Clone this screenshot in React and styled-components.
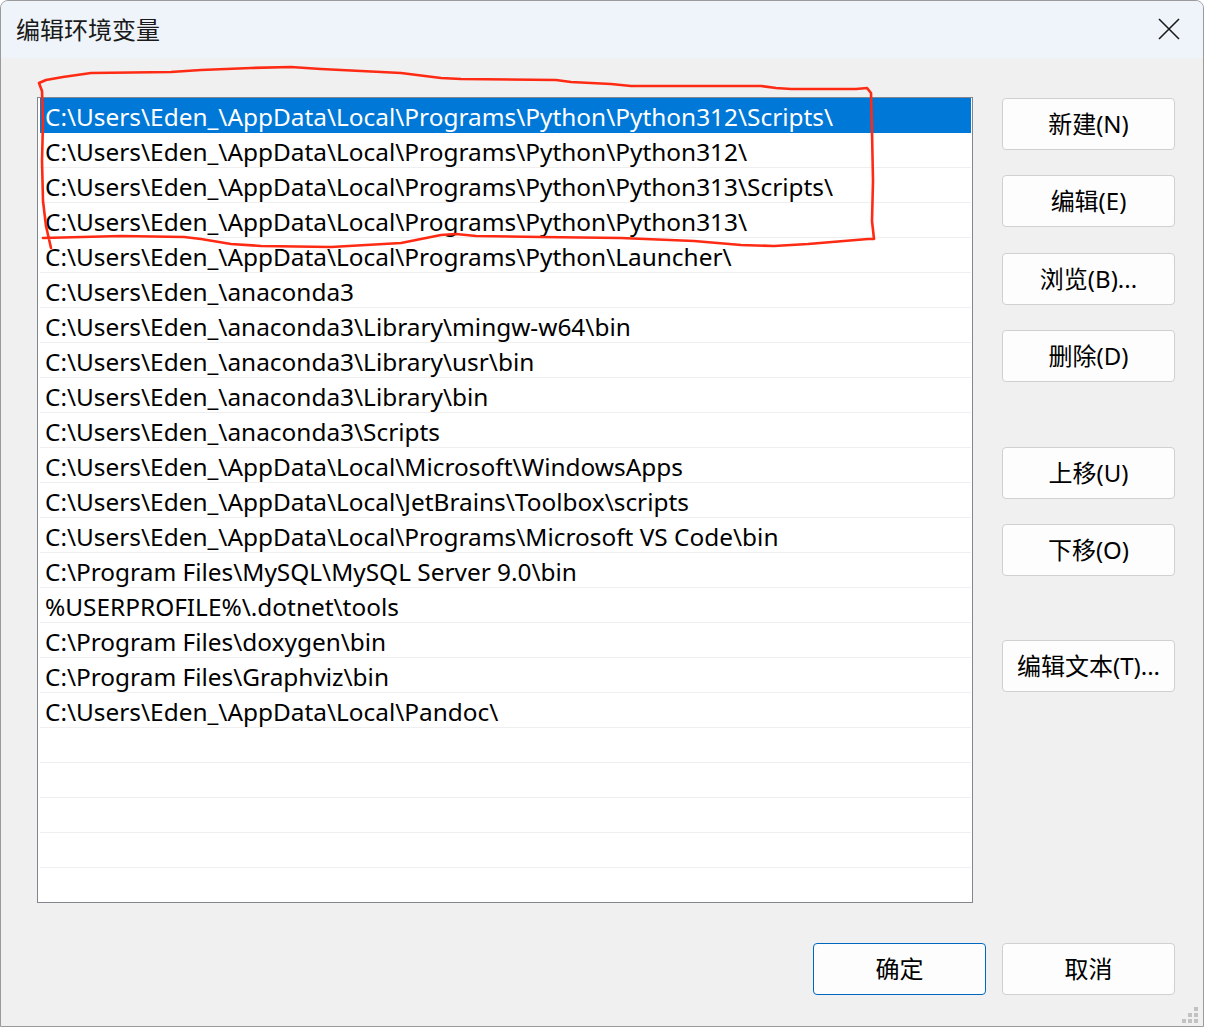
import React from 'react';
import styled, { createGlobalStyle } from 'styled-components';

const GlobalStyle = createGlobalStyle`
  html, body {
    margin: 0;
    padding: 0;
    background: #ffffff;
  }
  body {
    font-family: "Noto Sans", "Noto Sans CJK SC", sans-serif;
    color: #000;
  }
`;

const paths = [
  'C:\\Users\\Eden_\\AppData\\Local\\Programs\\Python\\Python312\\Scripts\\',
  'C:\\Users\\Eden_\\AppData\\Local\\Programs\\Python\\Python312\\',
  'C:\\Users\\Eden_\\AppData\\Local\\Programs\\Python\\Python313\\Scripts\\',
  'C:\\Users\\Eden_\\AppData\\Local\\Programs\\Python\\Python313\\',
  'C:\\Users\\Eden_\\AppData\\Local\\Programs\\Python\\Launcher\\',
  'C:\\Users\\Eden_\\anaconda3',
  'C:\\Users\\Eden_\\anaconda3\\Library\\mingw-w64\\bin',
  'C:\\Users\\Eden_\\anaconda3\\Library\\usr\\bin',
  'C:\\Users\\Eden_\\anaconda3\\Library\\bin',
  'C:\\Users\\Eden_\\anaconda3\\Scripts',
  'C:\\Users\\Eden_\\AppData\\Local\\Microsoft\\WindowsApps',
  'C:\\Users\\Eden_\\AppData\\Local\\JetBrains\\Toolbox\\scripts',
  'C:\\Users\\Eden_\\AppData\\Local\\Programs\\Microsoft VS Code\\bin',
  'C:\\Program Files\\MySQL\\MySQL Server 9.0\\bin',
  '%USERPROFILE%\\.dotnet\\tools',
  'C:\\Program Files\\doxygen\\bin',
  'C:\\Program Files\\Graphviz\\bin',
  'C:\\Users\\Eden_\\AppData\\Local\\Pandoc\\',
];

const TOTAL_ROWS = 23;

const sideButtons = [
  { label: '新建(N)', top: 0 },
  { label: '编辑(E)', top: 25 },
  { label: '浏览(B)...', top: 26 },
  { label: '删除(D)', top: 25 },
  { label: '上移(U)', top: 65 },
  { label: '下移(O)', top: 25 },
  { label: '编辑文本(T)...', top: 64 },
];

const Window = styled.div`
  position: relative;
  width: 1204px;
  height: 1027px;
  box-sizing: border-box;
  border: 1px solid #9a9a9a;
  border-radius: 8px 8px 0 0;
  background: #f0f0f0;
  overflow: hidden;
  display: flex;
  flex-direction: column;
`;

const TitleBar = styled.div`
  height: 57px;
  flex: none;
  background: #eef4f9;
  display: flex;
  align-items: center;
  justify-content: space-between;
  padding: 0 22px 0 15px;
`;

const Title = styled.div`
  font-size: 24px;
  font-family: "Noto Sans CJK SC", sans-serif;
  color: #1a1a1a;
  margin-top: -3px;
`;

const CloseButton = styled.div`
  width: 24px;
  height: 24px;
  display: flex;
  align-items: center;
  justify-content: center;
  margin-top: -1px;
`;

const Body = styled.div`
  flex: 1;
  display: flex;
  flex-direction: column;
  padding: 39px 28px 0 36px;
`;

const Main = styled.div`
  display: flex;
  gap: 29px;
`;

const ListBox = styled.div`
  position: relative;
  width: 936px;
  height: 806px;
  box-sizing: border-box;
  border: 1px solid #82878f;
  background: #ffffff;
  padding: 0 1px 0 2px;
  overflow: hidden;
`;

const Row = styled.div`
  height: 35px;
  box-sizing: border-box;
  border-bottom: 1px solid ${(p) => (p.$selected ? '#0078d7' : '#efefef')};
  background: ${(p) => (p.$selected ? '#0078d7' : 'transparent')};
  color: ${(p) => (p.$selected ? '#ffffff' : '#000000')};
  font-size: 24.4px;
  line-height: 37px;
  padding-left: 5px;
  white-space: nowrap;
  overflow: hidden;
`;

const ButtonColumn = styled.div`
  display: flex;
  flex-direction: column;
  padding-top: 1px;
`;

const Button = styled.div`
  width: 173px;
  height: 52px;
  box-sizing: border-box;
  border: 1px solid ${(p) => (p.$primary ? '#0067c0' : '#d0d0d0')};
  border-radius: 4px;
  background: #fdfdfd;
  display: flex;
  align-items: center;
  justify-content: center;
  padding-bottom: 3px;
  font-size: 24px;
  font-family: "Noto Sans", "Noto Sans CJK SC", sans-serif;
  color: #000;
  margin-top: ${(p) => p.$top || 0}px;
`;

const Footer = styled.div`
  display: flex;
  justify-content: flex-end;
  gap: 16px;
  margin-top: 40px;
`;

const Annotation = styled.svg`
  position: absolute;
  left: 0;
  top: 0;
  pointer-events: none;
`;

const Grip = styled.svg`
  position: absolute;
  right: 4px;
  bottom: 2px;
`;

function CloseIcon() {
  return (
    <svg width="22" height="22" viewBox="0 0 22 22">
      <path d="M1 1 L21 21 M21 1 L1 21" stroke="#1b1b1b" strokeWidth="1.6" fill="none" />
    </svg>
  );
}

function ResizeGrip() {
  const dots = [
    [12, 0],
    [6, 6], [12, 6],
    [0, 12], [6, 12], [12, 12],
  ];
  return (
    <Grip width="17" height="17" viewBox="0 0 17 17">
      {dots.map(([x, y]) => (
        <rect key={`${x}-${y}`} x={x} y={y} width="4" height="4" fill="#c2c2c2" />
      ))}
    </Grip>
  );
}

// hand-drawn highlight loop around the first four rows
const redLoop =
  'M38 82 L45 79 L62 76 L90 72 L170 71 L200 69 L250 67 L290 66 L320 68 L360 70 L400 72 ' +
  'L440 77 L460 78 L555 79 L570 81 L610 83 L630 85 L760 85 L775 87 L790 88 L855 88 L866 87 ' +
  'L870 92 L871 130 L872 180 L871 220 L873 238 L867 238 L807 243 L773 245 L740 244 L693 240 ' +
  'L620 237 L540 236 L475 235 L455 233 L440 234 L425 237 L400 242 L330 246 L260 245 L230 243 ' +
  'L200 238 L183 236 L120 235 L42 237 ' +
  'M38 82 L41 90 L42 120 L41 160 L42 200 L45 225 L50 247';

export default function App() {
  const rows = Array.from({ length: TOTAL_ROWS }, (_, i) => paths[i] || '');
  return (
    <>
      <GlobalStyle />
      <Window>
        <TitleBar>
          <Title>编辑环境变量</Title>
          <CloseButton>
            <CloseIcon />
          </CloseButton>
        </TitleBar>
        <Body>
          <Main>
            <ListBox>
              {rows.map((text, i) => (
                <Row key={i} $selected={i === 0}>
                  {text}
                </Row>
              ))}
            </ListBox>
            <ButtonColumn>
              {sideButtons.map((b) => (
                <Button key={b.label} $top={b.top}>
                  {b.label}
                </Button>
              ))}
            </ButtonColumn>
          </Main>
          <Footer>
            <Button $primary>确定</Button>
            <Button>取消</Button>
          </Footer>
        </Body>
        <ResizeGrip />
        <Annotation width="1204" height="1027" viewBox="0 0 1204 1027">
          <path
            d={redLoop}
            stroke="#ff2a14"
            strokeWidth="2.6"
            fill="none"
            strokeLinejoin="round"
            strokeLinecap="round"
          />
        </Annotation>
      </Window>
    </>
  );
}
